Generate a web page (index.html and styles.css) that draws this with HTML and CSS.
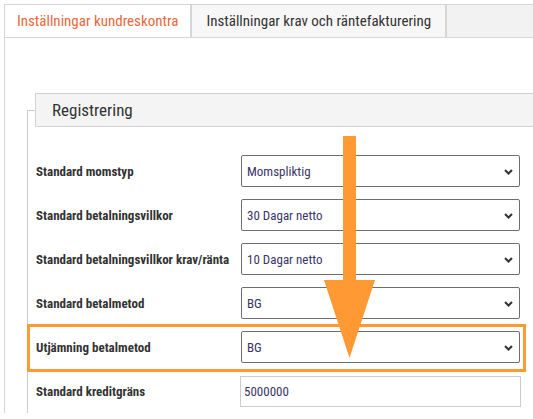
FILE: index.html
```html
<!DOCTYPE html>
<html lang="sv">
<head>
    <meta charset="UTF-8">
    <meta name="viewport" content="width=device-width, initial-scale=1.0">
    <title>Inställningar kundreskontra</title>
    <link rel="stylesheet" href="styles.css">
</head>
<body>
    <div class="page">
        <div class="tabs">
            <div class="tab active">Inställningar kundreskontra</div>
            <div class="tab">Inställningar krav och räntefakturering</div>
        </div>

        <div class="panel">
            <fieldset class="group">
                <legend>Registrering</legend>
                <div class="rows">
                    <div class="row">
                        <label>Standard momstyp</label>
                        <div class="select-wrap">
                            <select><option>Momspliktig</option></select>
                            <svg class="chevron" width="9" height="6" viewBox="0 0 9 6"><path d="M1 1 L4.5 4.5 L8 1" fill="none" stroke="#333" stroke-width="2"/></svg>
                        </div>
                    </div>
                    <div class="row">
                        <label>Standard betalningsvillkor</label>
                        <div class="select-wrap">
                            <select><option>30 Dagar netto</option></select>
                            <svg class="chevron" width="9" height="6" viewBox="0 0 9 6"><path d="M1 1 L4.5 4.5 L8 1" fill="none" stroke="#333" stroke-width="2"/></svg>
                        </div>
                    </div>
                    <div class="row">
                        <label>Standard betalningsvillkor krav/ränta</label>
                        <div class="select-wrap">
                            <select><option>10 Dagar netto</option></select>
                            <svg class="chevron" width="9" height="6" viewBox="0 0 9 6"><path d="M1 1 L4.5 4.5 L8 1" fill="none" stroke="#333" stroke-width="2"/></svg>
                        </div>
                    </div>
                    <div class="row">
                        <label>Standard betalmetod</label>
                        <div class="select-wrap">
                            <select><option>BG</option></select>
                            <svg class="chevron" width="9" height="6" viewBox="0 0 9 6"><path d="M1 1 L4.5 4.5 L8 1" fill="none" stroke="#333" stroke-width="2"/></svg>
                        </div>
                    </div>
                    <div class="row">
                        <label>Utjämning betalmetod</label>
                        <div class="select-wrap">
                            <select><option>BG</option></select>
                            <svg class="chevron" width="9" height="6" viewBox="0 0 9 6"><path d="M1 1 L4.5 4.5 L8 1" fill="none" stroke="#333" stroke-width="2"/></svg>
                        </div>
                    </div>
                    <div class="row">
                        <label>Standard kreditgräns</label>
                        <input type="text" class="text-input" value="5000000">
                    </div>
                </div>
            </fieldset>
        </div>

        <!-- annotation -->
        <div class="highlight"></div>
        <svg class="arrow" width="51" height="222" viewBox="0 0 51 222">
            <rect x="19" y="0" width="13" height="145" fill="#ff9933"/>
            <polygon points="0,144 51,144 25.5,222" fill="#ff9933"/>
        </svg>
    </div>
</body>
</html>
```

FILE: styles.css
```css
* {
    box-sizing: border-box;
}

body {
    margin: 0;
    overflow: hidden;
    background-color: #fff;
    color: #333;
    font-family: Roboto, "Noto Sans", sans-serif;
    font-stretch: condensed;
}

.page {
    position: relative;
    width: 533px;
    padding: 4px 0 0 4px;
}

.tabs {
    display: flex;
    background-color: #f2f2f2;
    border-top: 1px solid #d6d6d6;
    border-bottom: 1px solid #d6d6d6;
}

.tab {
    height: 32px;
    line-height: 32px;
    padding: 0 12px;
    font-size: 15px;
    color: #333;
}

.tab.active {
    background-color: #fff;
    color: #e8683a;
    border-left: 1px solid #d6d6d6;
}

.tab + .tab {
    background-color: #f7f7f7;
    border-left: 2px solid #d6d6d6;
    border-right: 2px solid #d6d6d6;
    padding: 0 14px;
}

.panel {
    border-left: 1px solid #d6d6d6;
    padding: 55px 0 0 22px;
}

.group {
    margin: 0;
    padding: 0 0 0 8px;
    border: 1px solid #ccc;
    border-right: none;
    border-bottom: none;
    min-width: 0;
}

.group legend {
    width: 498px;
    height: 34px;
    line-height: 32px;
    margin-left: -1px;
    padding: 0 16px;
    background-color: #f4f4f4;
    border: 1px solid #d3d3d3;
    border-right: none;
    font-size: 17px;
    color: #333;
}

.rows {
    padding-top: 22px;
}

.row {
    display: grid;
    grid-template-columns: 205px 279px;
    align-items: center;
    height: 44px;
}

.row label {
    font-size: 13px;
    font-weight: 700;
    color: #333;
}

.select-wrap {
    position: relative;
}

.select-wrap select {
    appearance: none;
    -webkit-appearance: none;
    width: 279px;
    height: 32px;
    padding: 0 24px 0 5px;
    border: 1px solid #6e6e6e;
    border-radius: 2px;
    background-color: #fff;
    font-family: inherit;
    font-stretch: condensed;
    font-size: 13px;
    color: #3a3566;
}

.chevron {
    position: absolute;
    right: 7px;
    top: 14px;
    pointer-events: none;
}

.text-input {
    width: 281px;
    height: 31px;
    margin-left: -1px;
    padding: 0 3px;
    border: 1px solid #ccc;
    font-family: inherit;
    font-stretch: condensed;
    font-size: 13px;
    color: #3a3566;
}

.highlight {
    position: absolute;
    left: 27px;
    top: 324px;
    width: 499px;
    height: 48px;
    border: 3px solid #ff9933;
}

.arrow {
    position: absolute;
    left: 324px;
    top: 136px;
}
```
